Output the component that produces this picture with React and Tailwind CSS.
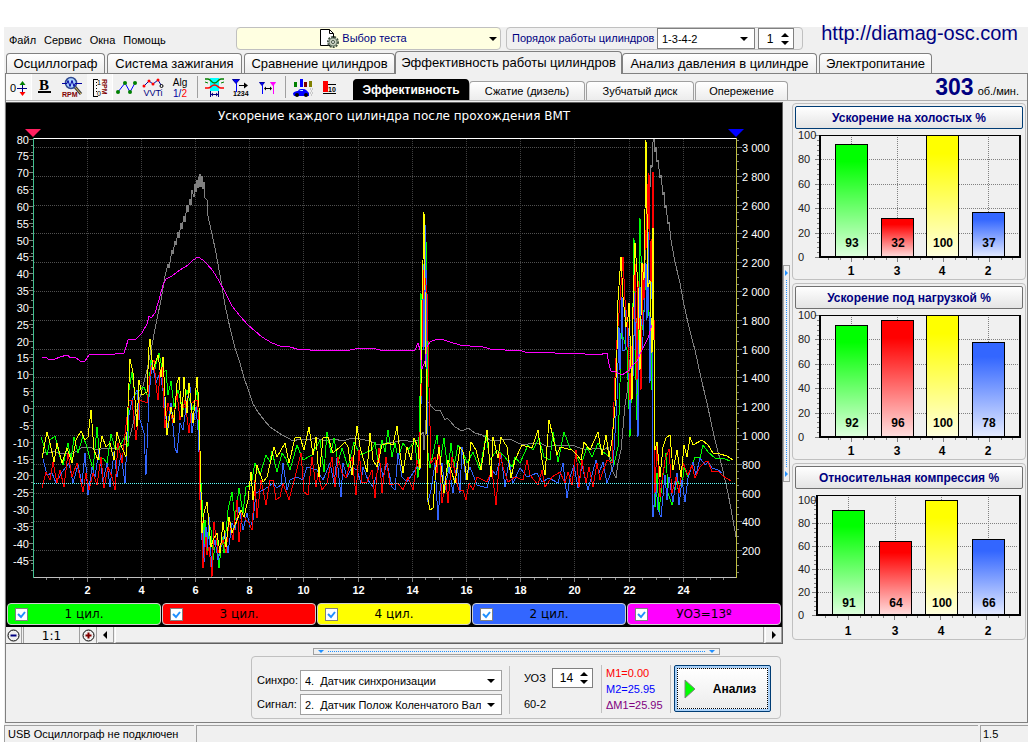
// src/App.jsx
import React, { useState } from 'react';

const TABS = [
  { name: 'Осциллограф', width: 'w-[99px] mr-0.5' },
  { name: 'Система зажигания', width: 'w-[135px] mr-0.5' },
  { name: 'Сравнение цилиндров', width: 'w-[151px]' },
  { name: 'Эффективность работы цилиндров', width: 'w-[227px]' },
  { name: 'Анализ давления в цилиндре', width: 'w-[195px] mr-0.5' },
  { name: 'Электропитание', width: 'w-[113px]' },
];

const SUB_TABS = [
  { name: 'Эффективность', width: 'w-[116px]' },
  { name: 'Сжатие (дизель)', width: 'w-[116px]' },
  { name: 'Зубчатый диск', width: 'w-[108px]' },
  { name: 'Опережение', width: 'w-[93px]' },
];

const LEGEND = [
  { label: '1 цил.', color: 'bg-[#00ff00]' },
  { label: '3 цил.', color: 'bg-[#ff0000]' },
  { label: '4 цил.', color: 'bg-[#ffff00]' },
  { label: '2 цил.', color: 'bg-[#3366ff]' },
  { label: 'УОЗ=13º', color: 'bg-[#ff00ff]' },
];

const BAR_COLORS = ['#00ff00', '#ff0000', '#ffff00', '#3366ff'];

const BAR_CHARTS = [
  { id: 'idle', title: 'Ускорение на холостых %', values: [93, 32, 100, 37], left: 26, top: 5, bottom: 127, unit: 1.22, bars: [42, 88, 133, 179], active: true },
  { id: 'load', title: 'Ускорение под нагрузкой %', values: [92, 96, 100, 78], left: 26, top: 5, bottom: 127, unit: 1.22, bars: [42, 88, 133, 179] },
  { id: 'comp', title: 'Относительная компрессия %', values: [91, 64, 100, 66], left: 23, top: 5, bottom: 125, unit: 1.15, bars: [39, 86, 132, 179] },
];

// Traces recorded for the whole run
const TRACES = [
  {
    color: '#808080',
    points: '42,454 46,452 50,453 54,451 60,454 66,453 72,454 77,451 81,448 86,447 92,448 98,450 104,448 110,449 116,448 122,446 126,444 130,436 134,420 138,405 142,390 147,370 152,345 156,324 161,300 165,276 168,264 169,268 172,250 173,254 175,241 176,245 178,232 179,238 181,223 182,229 184,216 185,222 187,205 188,212 190,199 191,205 192,190 194,197 195,184 196,192 197,180 198,188 199,177 199,187 200,174 201,187 202,176 203,189 204,182 205,198 207,200 207,212 210,225 215,248 220,275 225,305 230,328 235,348 240,363 244,378 248,389 253,404 258,412 264,420 270,427 276,431 282,435 288,438 293,441 300,439 308,440 316,438 325,441 334,439 343,441 352,438 360,439 370,441 378,445 386,443 395,442 404,440 412,442 418,440 423,432 424,450 426,420 428,402 432,407 436,411 440,410 445,420 447,418 450,421 455,427 462,431 468,428 475,433 482,435 490,440 500,440 510,439 518,443 524,445 532,443 540,443 548,447 556,445 564,446 572,445 580,448 588,450 596,448 604,450 608,447 610,460 612,470 616,478 618,463 621,450 623,428 625,405 627,393 630,360 640,300 645,260 648,200 650,187 651,165 652,168 653,142 654,139 655,152 656,147 657,162 658,160 660,178 661,175 663,195 664,192 665,208 666,205 668,224 669,222 671,240 675,262 680,283 683,300 688,323 693,343 695,350 701,378 707,403 711,422 715,440 722,467 728,493 733,520 736,537',
  },
  {
    color: '#00ff00',
    points: '41,437 47,455 50,440 55,436 60,457 63,465 68,443 71,460 74,437 78,453 83,436 87,447 93,470 97,427 100,460 103,458 107,463 111,434 115,448 118,450 125,436 128,447 129,390 132,372 135,395 140,390 144,387 148,397 151,360 154,373 157,360 159,353 163,373 166,370 168,395 171,381 174,407 178,390 183,410 187,390 189,398 193,410 197,390 199,433 201,483 203,517 204,545 205,520 207,553 209,525 211,530 213,560 215,547 217,540 219,568 222,537 224,553 228,510 232,492 235,520 239,488 243,513 246,487 251,485 255,463 260,475 266,455 270,462 272,451 277,472 282,453 286,459 290,470 297,445 303,460 312,455 320,440 324,472 327,432 331,453 334,438 338,463 342,448 348,467 354,442 360,455 372,450 375,442 378,462 382,440 385,452 388,430 392,457 395,443 398,458 403,443 408,450 415,440 418,478 420,397 421,293 422,340 423,262 424,330 425,227 426,240 427,317 428,453 430,468 437,435 440,463 444,438 448,472 451,443 454,467 458,445 463,452 467,463 473,452 480,470 486,435 490,460 497,450 505,457 512,467 515,457 520,463 528,445 533,450 539,438 544,457 550,460 553,432 558,462 564,432 570,448 575,453 581,465 587,447 592,457 598,443 603,452 610,457 614,465 618,447 620,383 622,297 623,337 627,350 628,380 630,437 632,370 634,238 636,380 637,420 639,300 640,218 643,330 646,270 648,307 651,333 652,390 653,253 654,320 655,507 657,473 659,512 662,483 666,453 668,493 672,505 677,480 682,487 684,467 688,477 695,457 700,458 703,445 708,452 715,458 725,459 730,461',
  },
  {
    color: '#3366ff',
    points: '43,459 47,475 52,473 56,483 62,472 69,463 73,483 78,465 82,483 85,453 88,495 92,467 95,477 99,450 103,482 107,463 110,487 114,452 117,477 121,455 125,483 128,420 132,400 137,390 140,420 144,433 146,475 149,397 152,363 156,383 160,372 164,397 167,430 171,403 175,448 177,453 180,423 183,430 187,400 190,387 192,433 196,407 198,430 200,473 202,540 203,530 204,562 206,527 207,548 209,517 210,545 212,567 213,550 215,540 218,560 222,543 225,533 228,553 232,523 235,530 239,507 243,530 247,513 250,527 253,520 256,493 263,490 268,487 273,483 277,488 281,485 283,463 287,490 290,480 297,477 303,480 307,467 317,470 323,480 330,463 334,483 337,458 341,497 343,463 347,477 352,467 357,470 361,483 363,467 368,480 373,487 380,463 383,477 387,463 392,487 395,490 398,453 402,477 407,482 413,473 417,467 420,470 422,340 423,263 424,350 425,223 426,333 426,270 427,400 428,502 431,490 435,463 438,520 442,463 445,490 449,467 453,493 457,463 460,493 462,447 466,480 470,467 477,485 487,488 492,470 496,475 501,455 505,487 509,460 513,483 520,468 527,477 537,473 542,482 549,478 558,483 563,463 567,498 570,477 574,465 578,488 582,465 588,490 596,460 599,473 603,462 607,483 613,467 617,400 619,327 620,370 622,297 623,350 625,350 626,310 628,327 630,430 632,350 633,377 635,293 636,350 638,437 639,340 640,287 642,350 643,337 646,263 647,320 648,230 649,310 650,383 651,300 652,250 653,517 656,483 658,510 661,517 665,475 667,500 669,477 673,502 677,473 679,505 682,480 685,502 688,478 693,462 696,475 700,458 705,465 708,462 712,468 718,470 722,473',
  },
  {
    color: '#ff0000',
    points: '42,488 46,472 50,480 53,462 57,483 60,470 64,487 68,453 72,477 77,463 83,492 86,473 89,490 93,473 97,485 101,457 104,488 108,467 112,477 115,490 118,443 122,463 126,425 129,400 132,400 136,440 140,400 147,403 151,367 154,360 156,385 158,400 160,372 162,367 165,428 168,403 173,423 177,393 180,420 185,400 189,433 192,403 197,400 199,420 200,500 202,520 203,568 206,537 207,555 209,547 212,577 214,522 218,553 223,540 226,553 229,520 233,540 237,500 239,542 242,513 246,520 249,523 252,530 255,480 257,518 261,480 266,505 270,480 273,480 276,500 280,497 283,483 289,500 295,477 301,453 304,492 308,495 312,457 316,487 318,473 322,490 327,483 332,457 335,487 338,457 342,473 346,478 352,457 356,495 359,450 362,483 367,482 372,470 375,498 379,448 382,493 386,457 390,485 398,483 403,490 408,477 413,490 417,460 419,467 421,397 423,300 424,270 427,293 429,387 431,463 435,457 437,473 439,445 442,503 446,480 448,503 452,457 457,483 459,490 463,490 466,500 469,483 473,490 477,477 487,482 492,470 496,505 500,453 503,467 508,482 515,477 523,480 527,460 530,475 538,485 542,470 545,487 552,477 560,472 565,483 568,472 572,485 576,450 579,487 582,460 586,483 589,467 593,487 597,463 600,480 607,460 612,463 613,427 615,377 617,340 620,300 623,257 625,300 627,320 630,400 633,320 635,263 637,380 638,280 641,390 643,263 644,300 645,230 646,250 647,183 648,230 649,173 650,240 651,283 652,240 653,172 654,320 655,493 657,442 660,497 662,480 665,460 669,449 672,493 676,477 679,493 683,463 688,475 692,465 695,478 700,467 705,462 708,461 712,472 718,471 723,476 731,481',
  },
  {
    color: '#ffff00',
    points: '42,458 47,432 50,443 54,462 57,443 62,463 67,448 72,463 76,440 81,431 85,440 88,437 91,410 94,450 98,460 102,436 106,447 110,443 114,460 117,432 120,443 126,457 128,407 130,359 133,373 137,427 139,380 142,395 147,392 149,347 150,339 153,370 158,355 161,377 163,357 167,435 171,407 174,423 177,383 179,377 182,417 184,377 187,413 189,383 193,423 197,377 199,407 200,450 202,533 204,513 207,502 211,547 213,540 217,533 220,553 223,522 226,547 229,517 232,533 237,520 241,510 244,517 248,500 251,472 253,500 257,465 263,482 267,477 274,447 277,457 285,443 289,463 295,438 300,437 304,450 309,427 313,455 316,437 319,477 323,438 328,437 333,453 340,447 345,442 348,447 352,475 357,426 360,447 367,472 370,433 373,460 377,467 382,445 388,443 393,445 397,426 400,453 403,473 407,447 411,460 414,438 418,447 420,470 422,300 423,260 424,212 425,290 426,367 428,500 430,510 433,508 436,467 439,447 444,493 448,460 455,483 460,447 463,452 467,480 471,442 476,450 481,470 487,430 491,477 493,437 498,458 501,437 507,447 511,478 515,460 522,445 532,448 538,430 542,460 545,475 549,420 553,437 557,455 560,447 572,450 577,455 581,460 584,442 590,450 598,432 602,455 606,435 609,457 612,440 615,407 617,350 618,300 621,257 623,297 626,327 628,317 629,303 632,400 633,307 635,243 638,287 640,370 642,263 644,280 646,140 648,287 650,280 652,353 653,228 654,340 655,450 657,442 660,477 663,447 666,438 670,435 673,470 677,450 681,477 684,445 687,457 690,437 693,445 702,440 708,445 713,453 720,454 727,456 733,460',
  },
  {
    color: '#ff00ff',
    points: '42,358 45,357 50,360 55,359 60,357 67,355 71,358 75,357 80,361 85,361 89,355 95,354 104,355 115,354 124,353 126,347 128,340 136,339 142,333 147,324 149,316 151,318 155,313 159,300 163,285 166,279 172,276 180,270 188,265 193,260 198,257 203,260 207,264 213,271 219,281 225,292 232,306 240,316 248,325 255,331 262,337 272,343 280,346 290,347 297,349 310,350 330,350 350,350 360,348 372,348 380,350 400,351 415,350 418,343 420,350 422,369 425,361 427,347 430,342 437,339 444,340 450,342 460,345 470,346 480,346 490,349 505,350 520,350 527,353 540,352 555,353 570,353 585,354 598,355 607,353 609,364 611,371 616,372 622,375 628,371 633,365 637,361 642,350 648,338 652,325',
  },
];

const range = (from, to, step = 1) => {
  const out = [];
  for (let v = from; v <= to; v += step) out.push(v);
  return out;
};

const timeX = (t) => Math.round(32.3 + t * 27.1) + 0.5;
const percentY = (v) => Math.round(408 - v * 3.367) + 0.5;
const rpmY = (v) => Math.round(579 - v * 0.144) + 0.5;
const formatRpm = (v) => (v >= 1000 ? `${Math.floor(v / 1000)} ${String(v % 1000).padStart(3, '0')}` : String(v));

function MainChart() {
  return (
    <svg viewBox="6 103 776 498" className="block w-full h-auto bg-black" role="img" aria-label="Ускорение каждого цилиндра после прохождения ВМТ">
      <text x="394" y="120" textAnchor="middle" fill="#ffffff" className="font-['DejaVu_Sans',sans-serif] text-[12px]">Ускорение каждого цилиндра после прохождения ВМТ</text>

      <g shapeRendering="crispEdges" fill="none" strokeWidth="1">
        <g stroke="#505050" strokeDasharray="1 1">
          {range(200, 3000, 200).map(v => <line key={v} x1="34" x2="736" y1={rpmY(v)} y2={rpmY(v)} />)}
          {range(2, 24, 2).map(t => <line key={t} y1="139" y2="577" x1={timeX(t)} x2={timeX(t)} stroke="#404040" />)}
        </g>

        <g stroke="#808080">
          {range(-45, 80, 5).map(v => <line key={v} x1="29" x2="33" y1={percentY(v)} y2={percentY(v)} />)}
          {range(-49, 79).filter(v => (v * 3) % 5 !== 0 && v % 2 === 0).map(v => <line key={v} x1="31" x2="33" y1={percentY(v)} y2={percentY(v)} />)}
          {range(200, 3000, 200).map(v => <line key={v} x1="737" x2="742" y1={rpmY(v)} y2={rpmY(v)} />)}
          {range(50, 3050, 50).map(v => <line key={v} x1="737" x2="739" y1={rpmY(v)} y2={rpmY(v)} />)}
          {range(0.5, 25.5, 0.5).map(t => <line key={t} y1="578" y2={t % 2 === 0 ? 582 : 580} x1={timeX(t)} x2={timeX(t)} />)}
        </g>

        {TRACES.map(t => <polyline key={t.color} points={t.points} stroke={t.color} />)}

        <line x1="34" x2="736" y1="483.5" y2="483.5" stroke="#60ffff" strokeDasharray="1 1" />
        <line x1="33" x2="737" y1="138.5" y2="138.5" stroke="#ffffff" />
        <line x1="33" x2="737" y1="577.5" y2="577.5" stroke="#c0c0c0" />
        <line x1="33.5" x2="33.5" y1="138" y2="578" stroke="#40c090" />
        <line x1="736.5" x2="736.5" y1="138" y2="578" stroke="#c0c040" />
      </g>

      <polygon points="25,129 41,129 33,137" fill="#ff2060" />
      <polygon points="728,129 744,129 736,137" fill="#0000ff" />

      <g fill="#ffffff" className="font-['Liberation_Sans',Arial,sans-serif] text-[11px]">
        {range(-45, 80, 5).map(v => <text key={v} x="29" y={percentY(v) + 4} textAnchor="end">{v}</text>)}
        {range(200, 3000, 200).map(v => <text key={v} x="742" y={rpmY(v) + 4}>{formatRpm(v)}</text>)}
      </g>
      <g fill="#ffffff" textAnchor="middle" className="font-['Liberation_Sans',Arial,sans-serif] text-[11px] font-bold">
        {range(2, 24, 2).map(t => <text key={t} x={timeX(t)} y="594">{t}</text>)}
      </g>
    </svg>
  );
}

function BarChart({ chart }) {
  const { id, values, left, top, bottom, unit, bars } = chart;
  const yOf = (v) => Math.round(bottom - v * unit);
  return (
    <svg viewBox="1 0 230 149" className="block w-full h-auto mt-px" role="img" aria-label={chart.title}>
      <defs>
        {BAR_COLORS.map((c, i) => (
          <linearGradient key={c} id={`${id}-${i}`} x1="0" y1="0" x2="0" y2="1">
            <stop offset="0" stopColor={c} />
            <stop offset="0.15" stopColor={c} />
            <stop offset="1" stopColor={c} stopOpacity="0.12" />
          </linearGradient>
        ))}
      </defs>
      <g shapeRendering="crispEdges" stroke="#808080" strokeWidth="1">
        {[20, 40, 60, 80].map(v => <line key={v} x1={left} x2="225" y1={yOf(v) + 0.5} y2={yOf(v) + 0.5} strokeDasharray="1 1" />)}
        {bars.map(x => <line key={x} y1={top} y2={bottom} x1={x + 16.5} x2={x + 16.5} strokeDasharray="1 1" />)}
        {range(0, 100, 4).map(v => <line key={v} x1={v % 20 ? left - 2 : left - 4} x2={left} y1={yOf(v) + 0.5} y2={yOf(v) + 0.5} />)}
        {range(0, 16).map(i => <line key={i} y1={bottom} y2={i % 4 === 2 ? bottom + 5 : bottom + 3} x1={left + 9.5 + i * 11.5} x2={left + 9.5 + i * 11.5} />)}
      </g>
      <g shapeRendering="crispEdges">
        {values.map((v, i) => (
          <g key={i}>
            <rect x={bars[i]} y={yOf(v)} width="33" height={bottom - yOf(v)} fill="#ffffff" />
            <rect x={bars[i] + 0.5} y={yOf(v) + 0.5} width="32" height={bottom - yOf(v)} fill={`url(#${id}-${i})`} stroke="#000000" />
          </g>
        ))}
        <line x1={left} x2="228" y1={top + 0.5} y2={top + 0.5} stroke="#000000" />
        <line x1={left + 1} x2={left + 1} y1={top} y2={bottom + 1} stroke="#000000" strokeWidth="2" />
        <line x1="227" x2="227" y1={top} y2={bottom + 1} stroke="#000000" strokeWidth="2" />
        <line x1={left} x2="228" y1={bottom} y2={bottom} stroke="#000000" strokeWidth="2" />
      </g>
      <g fill="#202020" className="font-['Liberation_Sans',Arial,sans-serif] text-[11px]">
        {[0, 20, 40, 60, 80, 100].map(v => <text key={v} x="5" y={yOf(v) + 4}>{v}</text>)}
      </g>
      <g fill="#000000" textAnchor="middle" className="font-['Liberation_Sans',Arial,sans-serif] text-[12px] font-bold">
        {values.map((v, i) => <text key={i} x={bars[i] + 17} y="117">{v}</text>)}
        {[1, 3, 4, 2].map((n, i) => <text key={n} x={bars[i] + 16} y="145">{n}</text>)}
      </g>
    </svg>
  );
}

const tinyText = "font-['Liberation_Sans',Arial,sans-serif]";

/* Toolbar drawings, each on a 26x26 field */
const TOOL_ICONS = {
  zero: (
    <>
      <text x="4" y="18" fontSize="11" className={tinyText}>0</text>
      <path d="M11 14.5h10M16.5 10v9" stroke="#000080" shapeRendering="crispEdges" />
      <path d="M16.5 7l3 4h-6z" fill="#008000" />
      <path d="M16.5 22l3-4h-6z" fill="#ff0000" />
    </>
  ),
  bold: (
    <>
      <text x="11" y="16" fontSize="15" textAnchor="middle" fontWeight="bold" className="font-['Liberation_Serif',serif]">B</text>
      <path d="M5 18h13" stroke="#000" strokeWidth="2" />
    </>
  ),
  rpm: (
    <>
      <path d="M15 13l6 7" stroke="#404040" strokeWidth="3" />
      <path d="M15 13l6 7" stroke="#e0c060" />
      <circle cx="11" cy="9" r="5.5" fill="#a8d0ff" stroke="#304890" strokeWidth="1.5" />
      <path d="M2 9.5h5l1-3 2 6 2-6 2 6 1-3h7" fill="none" stroke="#0000a0" />
      <text x="2" y="23" fontSize="7" fontWeight="bold" fill="#800000" className={tinyText}>RPM</text>
    </>
  ),
  scale: (
    <>
      <path d="M11 5.5H6.5v17H11" fill="none" stroke="#000" shapeRendering="crispEdges" />
      <path d="M9.5 8v12" stroke="#000" strokeDasharray="1 2" shapeRendering="crispEdges" />
      <text x="10" y="11" fontSize="7" className={tinyText}>1</text>
      <text x="10" y="22" fontSize="7" className={tinyText}>0</text>
      <text transform="translate(15 5) rotate(90)" x="0" y="0" fontSize="7" fontWeight="bold" fill="#800000" className={tinyText}>RPM</text>
    </>
  ),
  line: (
    <>
      <path d="M4 18l7-9 5 9 5-9" fill="none" stroke="#0000ff" />
      <g fill="#008000"><circle cx="4" cy="18" r="2" /><circle cx="11" cy="9" r="2" /><circle cx="16" cy="18" r="2" /><circle cx="21" cy="9" r="2" /></g>
    </>
  ),
  vvti: (
    <>
      <path d="M3 12l5-5 4 3 5-4 3 5" fill="none" stroke="#0000a0" />
      <g fill="#ff0000"><circle cx="3" cy="12" r="1.5" /><circle cx="8" cy="7" r="1.5" /><circle cx="12" cy="10" r="1.5" /><circle cx="17" cy="6" r="1.5" /></g>
      <circle cx="20.5" cy="12" r="1.5" fill="none" stroke="#000" />
      <text x="12" y="22" fontSize="9" textAnchor="middle" fill="#000080" className={tinyText}>VVTi</text>
    </>
  ),
  alg: (
    <>
      <text x="12" y="12" fontSize="10" textAnchor="middle" className={tinyText}>Alg</text>
      <text x="12" y="23" fontSize="10" textAnchor="middle" fill="#0000a0" className={tinyText}>1/<tspan fill="#ff0000">2</tspan></text>
    </>
  ),
  waves: (
    <>
      <path d="M9 4h9v13H9z" fill="#00ffff" />
      <path d="M4 5h3c3 0 3 4 6.500 4S17 5 20 5h3" fill="none" stroke="#008000" strokeWidth="1.500" />
      <path d="M4 14h3c3 0 3-3 6.500-3S17 14 20 14h3" fill="none" stroke="#ff0000" strokeWidth="1.500" />
      <path d="M4 8l3 1M20 9l3-1" stroke="#008000" />
      <path d="M9.500 17v6M17.500 17v6M10 20.500h7" stroke="#000080" shapeRendering="crispEdges" />
      <path d="M10 20.500l2-2v4zM17 20.500l-2-2v4z" fill="#000080" />
    </>
  ),
  order: (
    <>
      <path d="M4.500 5.500h7l-3.500 4z" fill="#0000ff" stroke="#0000a0" />
      <path d="M8.500 9v9" stroke="#0000ff" shapeRendering="crispEdges" />
      <path d="M11 11.500h7" stroke="#000" shapeRendering="crispEdges" />
      <path d="M20 11.500l-4-3v6z" fill="#000" />
      <text x="5" y="22" fontSize="7" fontWeight="bold" className={tinyText}>1234</text>
    </>
  ),
  marks: (
    <>
      <path d="M4.500 8.500h5l-2.500 3z" fill="#0000ff" stroke="#0000a0" />
      <path d="M7.500 11v9" stroke="#0000ff" shapeRendering="crispEdges" />
      <path d="M15.500 8.500h5l-2.500 3z" fill="#ff00ff" stroke="#ff00ff" />
      <path d="M18.500 11v9" stroke="#ff00ff" shapeRendering="crispEdges" />
      <path d="M10 14.500h6" stroke="#000" shapeRendering="crispEdges" />
      <path d="M9 14.500l2-2v4zM17 14.500l-2-2v4z" fill="#000" />
    </>
  ),
  car: (
    <>
      <path d="M4 8h3v5H4z" fill="#008000" />
      <path d="M10 5h3v8h-3z" fill="#0000ff" />
      <path d="M14 8h3v5h-3z" fill="#800000" />
      <path d="M19 7h3v6h-3z" fill="#808000" />
      <path d="M3 20c0-2 3-3 5-3 1-2 2-2 5-2s4 2 6 4v3H4z" fill="#0000ff" />
      <path d="M9 17l2-1h2v1z" fill="#c0f0ff" />
      <circle cx="7" cy="21" r="2" fill="#000" /><circle cx="16" cy="21" r="2" fill="#000" />
      <path d="M20 15h3M21 17h2M20 19h3M21 21h2" stroke="#a0a0a0" strokeDasharray="1 1" />
    </>
  ),
  stop: (
    <>
      <path d="M6 7h5v11H6z" fill="#ff0000" />
      <path d="M6 19.500h13M11 10.500h8" stroke="#000" shapeRendering="crispEdges" />
      <text x="11" y="18" fontSize="7" fontWeight="bold" className={tinyText}>10</text>
    </>
  ),
};

function ToolButton({ icon, label, pressed }) {
  return (
    <button aria-label={label} className={`w-[26px] h-[26px] shrink-0 ${pressed ? 'bg-[#f8f8f8] border-r border-white' : ''}`}>
      <svg viewBox="0 0 26 26" width="26" height="26" className="block">{TOOL_ICONS[icon]}</svg>
    </button>
  );
}

function Arrow({ dir }) {
  const shape = { down: 'M0 2h8L4 6z', up: 'M0 6h8L4 2z', left: 'M5 0v8L1 4z', right: 'M2 0v8l4-4z' }[dir];
  return (
    <svg viewBox="0 0 8 8" width="8" height="8" className="block" aria-hidden="true">
      <path d={shape} fill="#000000" />
    </svg>
  );
}

function Select({ id, options, className }) {
  return (
    <div className={`relative bg-white border ${className}`}>
      <select id={id} className="block w-full h-full appearance-none bg-transparent pl-1 pr-5 leading-4 text-black outline-none">
        {options.map(o => <option key={o}>{o}</option>)}
      </select>
      <span className="absolute right-1.5 inset-y-0 flex items-center pointer-events-none"><Arrow dir="down" /></span>
    </div>
  );
}

function Spinner({ id, label, value, onChange, className }) {
  return (
    <div className={`flex items-center bg-white border border-[#808080] ${className}`}>
      <input id={id} aria-label={label} inputMode="numeric" value={value} onChange={e => onChange(Number(e.target.value) || 0)}
        className="min-w-0 flex-1 bg-transparent text-center text-[12px] leading-4 outline-none" />
      <div className="flex flex-col pr-1">
        <button aria-label="Больше" onClick={() => onChange(value + 1)}><Arrow dir="up" /></button>
        <button aria-label="Меньше" onClick={() => onChange(value - 1)}><Arrow dir="down" /></button>
      </div>
    </div>
  );
}

export default function App() {
  const [activeTab, setActiveTab] = useState('Эффективность работы цилиндров');
  const [activeSub, setActiveSub] = useState('Эффективность');
  const [cylinder, setCylinder] = useState(1);
  const [uoz, setUoz] = useState(14);

  return (
    <div className="bg-white px-1 pt-[27px] text-black font-['Liberation_Sans',Arial,sans-serif]">
      <div className="bg-[#f0f0f0]">
        {/* Menu and test selection */}
        <header className="flex h-6 items-start">
          <nav className="flex w-[232px] shrink-0 gap-2 pl-[5px] pt-[5px] text-[11px] leading-4">
            {['Файл', 'Сервис', 'Окна', 'Помощь'].map(item => <button key={item}>{item}</button>)}
          </nav>
          <button className="flex w-[265px] h-[23px] shrink-0 items-center rounded-sm border border-[#c0c0c0] bg-[#ffffe1] pr-[3px] text-[11px] text-[#000080]">
            <span className="flex flex-1 items-center justify-center gap-0.5">
              <svg viewBox="0 0 21 21" width="21" height="21" aria-hidden="true">
                <path d="M1.500 1.500h9l4 4v12h-13z" fill="#ffffff" stroke="#000000" />
                <path d="M10.500 1.500v4h4" fill="none" stroke="#000000" />
                <circle cx="14" cy="14" r="5" fill="none" stroke="#405040" strokeWidth="2" strokeDasharray="2 1" />
                <circle cx="14" cy="14" r="4" fill="#c8d0c0" stroke="#708070" />
                <circle cx="14" cy="14" r="1.500" fill="#ffffff" stroke="#405040" />
              </svg>
              Выбор теста
            </span>
            <Arrow dir="down" />
          </button>
          <div className="ml-[5px] flex w-[297px] h-[23px] shrink-0 items-center rounded-sm border border-[#c0c0c0] pl-[5px]">
            <label htmlFor="order" className="w-[145px] text-[11px] whitespace-nowrap text-[#000080]">Порядок работы цилиндров</label>
            <Select id="order" options={['1-3-4-2', '1-2-4-3']} className="w-[98px] h-[21px] border-[#808080] text-[11px]" />
            <Spinner id="cyl" label="Цилиндр" value={cylinder} onChange={setCylinder} className="ml-[3px] w-9 h-[21px]" />
          </div>
          <a href="http://diamag-osc.com" className="-mt-1.5 ml-auto mr-2.5 text-[20px] leading-6 text-[#000080]">http://diamag-osc.com</a>
        </header>

        <div className="flex h-[22px] items-end pl-0.5">
          {TABS.map(tab => {
            const active = activeTab === tab.name;
            return (
              <button key={tab.name} onClick={() => setActiveTab(tab.name)}
                className={`shrink-0 rounded-t-sm border border-b-0 border-[#808080] text-[13px] leading-4 whitespace-nowrap ${tab.width} ${
                  active ? 'relative h-[23px] -mb-px bg-[#f0f0f0]' : 'h-5 bg-gradient-to-b from-white to-[#ececec]'
                }`}>
                {tab.name}
              </button>
            );
          })}
        </div>

        <main className="ml-px border border-[#808080]">
          {/* Toolbar */}
          <div className="flex h-[27px] items-start border-b border-[#b0b0b0]">
            <div className="flex gap-px">
              <ToolButton icon="zero" label="Ноль" pressed />
              <ToolButton icon="bold" label="Толщина линий" />
              <ToolButton icon="rpm" label="Обороты" />
              <ToolButton icon="scale" label="Шкала оборотов" pressed />
              <ToolButton icon="line" label="График" />
              <ToolButton icon="vvti" label="VVTi" />
              <ToolButton icon="alg" label="Алгоритм" />
            </div>
            <div className="mx-[3px] mt-0.5 h-[22px] w-px bg-[#a0a0a0]" />
            <div className="flex gap-px">
              <ToolButton icon="waves" label="Сравнение" />
              <ToolButton icon="order" label="Порядок" />
              <ToolButton icon="marks" label="Маркеры" />
            </div>
            <div className="mx-1 mt-0.5 h-[22px] w-px bg-[#a0a0a0]" />
            <div className="flex gap-px">
              <ToolButton icon="car" label="Разгон" />
              <ToolButton icon="stop" label="Стоп" />
            </div>
            <div className="ml-2.5 flex h-[26px] items-end gap-px">
              {SUB_TABS.map(tab => {
                const active = activeSub === tab.name;
                return (
                  <button key={tab.name} onClick={() => setActiveSub(tab.name)}
                    className={`shrink-0 rounded-t-sm border border-b-0 whitespace-nowrap leading-4 ${tab.width} ${
                      active ? 'h-[21px] -mr-px border-black bg-black text-[12px] font-bold text-white' : 'h-[19px] border-[#a0a0a0] bg-gradient-to-b from-white to-[#ececec] text-[11px]'
                    }`}>
                    {tab.name}
                  </button>
                );
              })}
            </div>
            <div className="ml-auto mr-2 flex items-baseline gap-1 whitespace-nowrap">
              <span className="text-[23px] leading-[26px] font-bold text-[#000080]">303</span>
              <span className="text-[11px] leading-4">об./мин.</span>
            </div>
          </div>

          <div className="flex pt-px">
            <div className="flex min-w-0 flex-1 flex-col">
              <section className="border-t border-r border-b border-[#606060]">
                <MainChart />
                <div className="grid grid-cols-5 gap-px bg-black px-px pt-0.5 pb-0.5">
                  {LEGEND.map(item => (
                    <label key={item.label} className={`relative flex h-[22px] items-center justify-center rounded-sm border border-[#d0d0d0] font-['DejaVu_Sans',sans-serif] text-[12px] leading-4 ${item.color}`}>
                      <span className="absolute left-[7px] flex">
                        <input type="checkbox" defaultChecked className="peer size-[13px] appearance-none border border-[#808080] bg-white" />
                        <svg viewBox="0 0 13 13" className="pointer-events-none absolute inset-0 hidden size-[13px] peer-checked:block" aria-hidden="true">
                          <path d="M3 6l3 3 4-5" fill="none" stroke="#2090ff" strokeWidth="2" />
                        </svg>
                      </span>
                      {item.label}
                    </label>
                  ))}
                </div>
                {/* Zoom and horizontal scroll */}
                <div className="flex h-4 items-stretch gap-px">
                  <button aria-label="Уменьшить" className="w-4 border-r border-[#a0a0a0]">
                    <svg viewBox="0 0 15 15" width="15" height="15"><circle cx="7.500" cy="7.500" r="5.500" fill="none" stroke="#000" /><path d="M4.500 7.500h6" stroke="#000080" strokeWidth="2" /></svg>
                  </button>
                  <span className="w-[57px] border-x border-[#a0a0a0] pt-px text-center font-['DejaVu_Sans',sans-serif] text-[12px] leading-4">1:1</span>
                  <button aria-label="Увеличить" className="w-4 border-r border-[#a0a0a0]">
                    <svg viewBox="0 0 15 15" width="15" height="15"><circle cx="7.500" cy="7.500" r="5.500" fill="none" stroke="#000" /><path d="M4.500 7.500h6M7.500 4.500v6" stroke="#800000" strokeWidth="2" /></svg>
                  </button>
                  <button aria-label="Влево" className="flex w-4 items-center justify-center border-r border-b border-[#a0a0a0]"><Arrow dir="left" /></button>
                  <div className="flex-1 border-r border-b border-l border-[#a0a0a0] border-l-white" />
                  <button aria-label="Вправо" className="flex w-[17px] items-center justify-center border-r border-b border-l border-[#a0a0a0] border-l-white"><Arrow dir="right" /></button>
                </div>
              </section>

              <div className="ml-auto mr-0.5 flex w-[530px] flex-col items-center pt-1 pb-[3px]">
                <div className="flex h-[7px] w-[407px] items-center justify-between border border-[#a0a0a0] px-1">
                  <svg viewBox="0 0 6 3" width="6" height="3"><path d="M0 0h6L3 3z" fill="#2090ff" /></svg>
                  <div className="mx-1 flex-1 border-t border-dotted border-[#2090ff]" />
                  <svg viewBox="0 0 6 3" width="6" height="3"><path d="M0 0h6L3 3z" fill="#2090ff" /></svg>
                </div>
                <div className="mt-px flex h-[63px] w-full rounded-sm border border-[#c0c0c0] pl-[5px]">
                  <div className="grid h-fit grid-cols-[43px_202px] items-center gap-y-[3px] pt-[13px] text-[11px] whitespace-nowrap">
                    <label htmlFor="sync">Синхро:</label>
                    <Select id="sync" options={['4.\u00a0 Датчик синхронизации']} className="h-[21px] border-[#a0a0a0]" />
                    <label htmlFor="signal">Сигнал:</label>
                    <Select id="signal" options={['2.\u00a0 Датчик Полож Коленчатого Вала']} className="h-[21px] border-[#a0a0a0]" />
                  </div>
                  <div className="mt-[9px] ml-[7px] h-12 w-px bg-[#c0c0c0]" />
                  <div className="ml-3.5 w-[70px] pt-[11px] text-[11px]">
                    <div className="flex items-center">
                      <label htmlFor="uoz" className="w-7">УОЗ</label>
                      <Spinner id="uoz" value={uoz} onChange={setUoz} className="w-[41px] h-5" />
                    </div>
                    <p className="mt-1.5 leading-5">60-2</p>
                  </div>
                  <div className="mt-2 ml-[7px] h-12 w-px bg-[#c0c0c0]" />
                  <div className="ml-1 w-[64px] pt-2 text-[11px] leading-4 whitespace-nowrap">
                    <p className="text-[#ff0000]">M1=0.00</p>
                    <p className="text-[#0000ff]">M2=25.95</p>
                    <p className="text-[#800080]">ΔM1=25.95</p>
                  </div>
                  <div className="mt-2 h-12 w-px bg-[#c0c0c0]" />
                  <button className="mt-2 ml-[3px] flex h-[47px] w-[97px] rounded-xs border border-[#003c74] bg-[#a8d0f8] p-0.5">
                    <span className="flex h-full w-full items-center border border-dotted border-black bg-gradient-to-b from-white to-[#ececec] pl-1.5">
                      <svg viewBox="0 0 12 20" width="12" height="20"><path d="M1 1v18l10-9z" fill="#00ff00" stroke="#808080" /></svg>
                      <span className="flex-1 text-center text-[12px] font-bold pl-1.5">Анализ</span>
                    </span>
                  </button>
                </div>
              </div>
            </div>

            {/* Side splitter */}
            <div className="w-[9px] shrink-0 pt-[163px]">
              <div className="flex h-[217px] w-[7px] flex-col items-center border border-[#a0a0a0] py-1">
                <svg viewBox="0 0 3 6" width="3" height="6"><path d="M0 0v6l3-3z" fill="#2090ff" /></svg>
                <div className="my-1 flex-1 border-l border-dotted border-[#2090ff]" />
                <svg viewBox="0 0 3 6" width="3" height="6"><path d="M0 0v6l3-3z" fill="#2090ff" /></svg>
              </div>
            </div>

            <aside className="flex w-[235px] shrink-0 flex-col gap-[3px] pt-px pr-px">
              {BAR_CHARTS.map(chart => (
                <section key={chart.id} className="rounded-sm border border-[#c0c0c0] px-px pt-0.5">
                  <button className={`mx-px block h-[23px] w-[228px] rounded-xs border bg-gradient-to-b from-white to-[#e4e4e4] text-[12px] font-bold text-[#000080] ${
                    chart.active ? 'border-[#003c74]' : 'border-[#707070]'
                  }`}>
                    {chart.title}
                  </button>
                  <BarChart chart={chart} />
                </section>
              ))}
            </aside>
          </div>
        </main>

        {/* Status bar */}
        <footer className="flex gap-0.5 pt-0.5 text-[11px] leading-4">
          <div className="w-[190px] border-t border-l border-[#a0a0a0] pl-[3px]">USB Осциллограф не подключен</div>
          <div className="flex-1 border-t border-l border-[#a0a0a0]" />
          <div className="w-12 border-t border-l border-[#a0a0a0] pl-0.5">1.5</div>
        </footer>
      </div>
    </div>
  );
}
